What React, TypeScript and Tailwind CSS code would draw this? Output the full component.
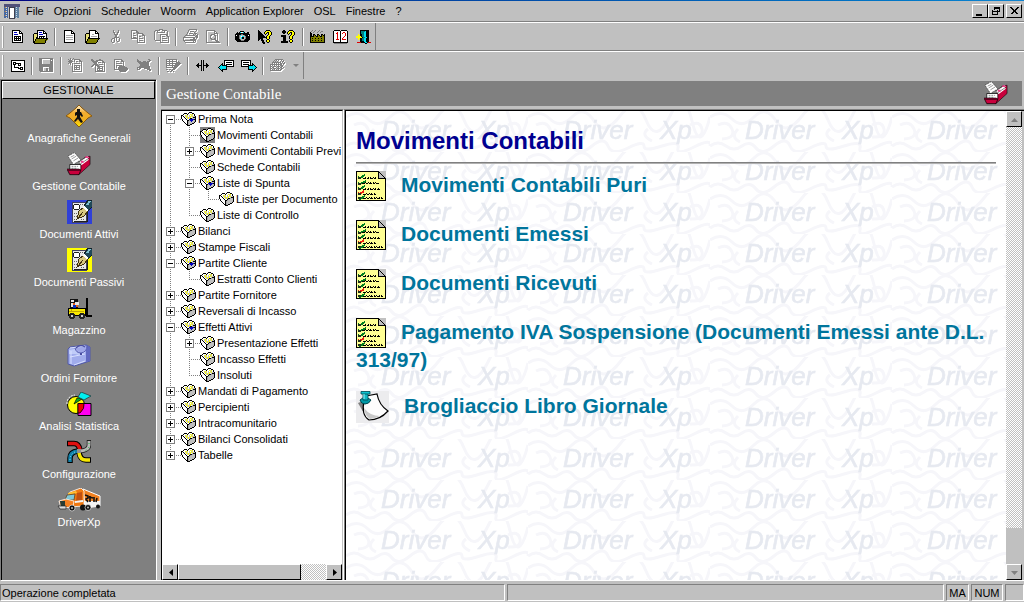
import React, { useState } from "react";

type Node = { label: string; open?: boolean; selected?: boolean; children?: Node[] };

const palette: Record<string, string> = {
  k: "#000000",
  w: "#ffffff",
  g: "#808080",
  s: "#c0c0c0",
  y: "#ffff00",
  o: "#808000",
  b: "#0000c0",
  c: "#00e0f0",
  t: "#008080",
  r: "#e00000",
  l: "#e8e078",
  d: "#a8a8a8",
};

function Pixels({ rows, disabled = false }: { rows: string[]; disabled?: boolean }) {
  const w = Math.max(...rows.map((r) => r.length));
  const h = rows.length;
  const runs: { x: number; y: number; n: number; c: string }[] = [];
  rows.forEach((row, y) => {
    let x = 0;
    while (x < row.length) {
      const c = row[x];
      let n = 1;
      while (row[x + n] === c) n++;
      if (palette[c]) runs.push({ x, y, n, c });
      x += n;
    }
  });
  const ink = disabled ? runs.filter((r) => r.c === "k") : runs;
  const extra = disabled ? 1 : 0;
  return (
    <svg width={w + extra} height={h + extra} shapeRendering="crispEdges" aria-hidden="true" className="shrink-0">
      {disabled && ink.map((r, i) => <rect key={"s" + i} x={r.x + 1} y={r.y + 1} width={r.n} height={1} fill="#ffffff" />)}
      {ink.map((r, i) => (
        <rect key={i} x={r.x} y={r.y} width={r.n} height={1} fill={disabled ? "#808080" : palette[r.c]} />
      ))}
    </svg>
  );
}

const art: Record<string, string[]> = {
  report: [
    "kkkkkkkk...",
    "kwwwwwwkk..",
    "kwbbbwwkwk.",
    "kwwwwwwkkkk",
    "kwbbbbwwwwk",
    "kwwwwwwwwwk",
    "kwkkkkkkkwk",
    "kwkwkwkwkwk",
    "kwkkkkkkkwk",
    "kwkwkwkwkwk",
    "kwkkkkkkkwk",
    "kwwwwwwwwwk",
    "kkkkkkkkkkk",
  ],
  openReport: [
    "....kkkkkkk....",
    "....kwwwwwkk...",
    "....kwbbbwkwk..",
    ".kkkkwwwwwkkkk.",
    "klllkwbbbbwwwk.",
    "klllkwwwwwwwwk.",
    "klllkwkkkkkkwk.",
    "kllkkwkwkwkwwk.",
    "kllkkkkkkkkkkkk",
    "klkooooooooooko",
    "klkoooooooooko.",
    "kkooooooooook..",
    "kkooooooooook..",
    ".kkkkkkkkkkk...",
  ],
  page: [
    "kkkkkkkk...",
    "kwwwwwwkk..",
    "kwwwwwwkwk.",
    "kwwwwwwkkkk",
    "kwwwwwwwwwk",
    "kwdddddddwk",
    "kwwwwwwwwwk",
    "kwdddddddwk",
    "kwwwwwwwwwk",
    "kwdddddddwk",
    "kwwwwwwwwwk",
    "kwwwwwwwwwk",
    "kkkkkkkkkkk",
  ],
  openPage: [
    "....kkkkkkk....",
    "....kwwwwwkk...",
    "....kwwwwwkwk..",
    ".kkkkwwwwwkkkk.",
    "klllkwwddwwwwk.",
    "klllkwwwwwwwwk.",
    "klllkwddddddwk.",
    "kllkkwwwwwwwwk.",
    "kllkkkkkkkkkkkk",
    "klkooooooooook.",
    "klkoooooooook..",
    "kkooooooooook..",
    "kkoooooooook...",
    ".kkkkkkkkkk....",
  ],
  cut: [
    "..k....k.",
    "..k....k.",
    "..kk..kk.",
    "...k..k..",
    "...kkkk..",
    "....kk...",
    "....kk...",
    "...kkkkk.",
    ".kkk.k..k",
    "k..k.k..k",
    "k..k.k..k",
    "k..k..kk.",
    ".kk......",
  ],
  copy: [
    "kkkkkk.........",
    "k....kk........",
    "k....kkk.......",
    "k.kk..kkkkkk...",
    "k.....k....kk..",
    "k.kkk.k....kkk.",
    "k.....k.kk...k.",
    "k.kkk.k......k.",
    "kkkkkkk.kkkk.k.",
    "......k......k.",
    "......k.kkkk.k.",
    "......k......k.",
    "......kkkkkkkk.",
  ],
  paste: [
    ".....kkkk......",
    ".kkkkk..kkkkk..",
    "k..k......k..k.",
    "k..kkkkkkkk..k.",
    "k............k.",
    "k.....kkkkkkkk.",
    "k.....k.....kk.",
    "k.....k.kkk..kk",
    "k.....k.......k",
    "k.....k.kkkkk.k",
    "k.....k.......k",
    ".kkkkkk.kkkkk.k",
    "......k.......k",
    "......kkkkkkkkk",
  ],
  print: [
    "......kkkkkkkk.",
    ".....k.......k.",
    ".....k.kkkk.k..",
    "....k......k...",
    "....k.kkkk.kkk.",
    "...k......k.k.k",
    "..kkkkkkkkkk.kk",
    ".k..........kkk",
    "kkkkkkkkkkkk.kk",
    "k.........kk.k.",
    "k......kkkkkk..",
    "kkkkkkkkkkkkk..",
    ".k........k.k..",
    "..kkkkkkkkkk...",
  ],
  preview: [
    "kkkkkkkkk.....",
    "k.......kk....",
    "k.......k.k...",
    "k.......kkkk..",
    "k....kkkk..k..",
    "k...kk..kk.k..",
    "k...k....k.k..",
    "k...k....k.k..",
    "k...kk..kk.k..",
    "k....kkkkk.k..",
    "k........kkk..",
    "k.........kkk.",
    "kkkkkkkkkkkkkk",
  ],
  camera: [
    ".....kkkk......",
    "..k.kcwwck..kk.",
    ".kkkkkkkkkkkkk.",
    "kkkkkkggkkkkkkk",
    "kwkkgcsssgkkkwk",
    "kkkkgswccsgkkkk",
    "kkkkgsckksgkkkk",
    "kkkkgsckksgkkkk",
    "kkkkkgsssgkkkkk",
    ".kkkkkgggkkkkk.",
    "..kkkkkkkkkkk..",
  ],
  pointerHelp: [
    "k.......kkkk...",
    "kk.....kyyyyk..",
    "kkk...kyykkyyk.",
    "kkkk..kyk.kyyk.",
    "kkkkk..k..kyyk.",
    "kkkkkk...kyyk..",
    "kkkkkkk.kyyk...",
    "kkkkkkkkkyyk...",
    "kkkkk...kyyk...",
    "kk.kk....kk....",
    "k..kkk..kyyk...",
    "....kk..kyyk...",
    "....kkk..kk....",
    ".....kk........",
  ],
  infoHelp: [
    "..kk....kkkk...",
    ".kkkk..kyyyyk..",
    ".kkkk.kyykkyyk.",
    "..kk..kyk.kyyk.",
    ".......k..kyyk.",
    "kkkkk....kyyk..",
    "kkkkk...kyyk...",
    "..kkk...kyyk...",
    "..kkk...kyyk...",
    "..kkk....kk....",
    "..kkk...kyyk...",
    "kkkkkkk.kyyk...",
    "kkkkkkk..kk....",
  ],
  factory: [
    "..g..g...g.....",
    ".g..g...g..gg..",
    "k..g...g..g....",
    "kk.............",
    "kk.kk..kk..kk.k",
    "kk.kok.kok.kokk",
    "kkkkookkookkook",
    "koooooooooooook",
    "kokookookookook",
    "koooooooooooook",
    "kokookookookook",
    "koooooooooooook",
    "kkkkkkkkkkkkkkk",
  ],
  book: [
    ".kkkkkk.kkkkkk..",
    "kwwwwwwkwwwwwwk.",
    "kwwwrwwkwwrrwwk.",
    "kwwrrwwkwrwwrwk.",
    "kwwwrwwkwwwwrwk.",
    "kwwwrwwkwwwwrwk.",
    "kwwwrwwkwwwrwwk.",
    "kwwwrwwkwwrwwwk.",
    "kwwwrwwkwrwwwwk.",
    "kwwrrrwkwrrrrwk.",
    "kwwwwwwkwwwwwwk.",
    "kwwwwwwkwwwwwwk.",
    "kkkkkkkkkkkkkkk.",
    ".ggggggggggggg..",
  ],
  door: [
    "....kkkkkkkkk..",
    "....kttttckkk..",
    "....ktttcckkk..",
    "....ktttcckkk..",
    "..y.kkttcckkk..",
    "..yykkttcckkk..",
    "yyyyykttcckkk..",
    "yyyyyykttcckk..",
    "..yykkttcckkk..",
    "..y.kkttcckkk..",
    "....kkttcckkk..",
    "....kkkkcckkk..",
    ".rrrrkkkkcckrrr",
    ".........kk....",
  ],
  treeView: [
    "kkkkkkkkkkkkkk",
    "kwwwwwwwwwwwwk",
    "kwkkkwwwwwwwwk",
    "kwkwkkkkkkwwwk",
    "kwkkkwwkwkwwwk",
    "kwwkwwwkkkwwwk",
    "kwwkwwwwwwwwwk",
    "kwwkkkkkwkkkwk",
    "kwwwwwwkkkwkwk",
    "kwwwwwwwwkkkwk",
    "kwwwwwwwwwwwwk",
    "kkkkkkkkkkkkkk",
  ],
  save: [
    "kkkkkkkkkkkkkk",
    "kkk........kkk",
    "kkk........k.k",
    "kkk........kkk",
    "kkk........kkk",
    "kkk........kkk",
    "kkkkkkkkkkkkkk",
    "kkkkkkkkkkkkkk",
    "kkkkkkkkkkkkkk",
    "kkkk......kkkk",
    "kkkk...kk.kkkk",
    "kkkk...kk.kkkk",
    "kkkk...kk.kkkk",
    ".kkkkkkkkkkkkk",
  ],
  addDoc: [
    "..k..k........",
    "k.k.k.kkkkkk..",
    ".kkk..k....kk.",
    "kkkkk.k.kk.kkk",
    ".kkk.........k",
    "k.k.k.kkkkkk.k",
    "..k.k........k",
    "....k.kkkkkk.k",
    "....k.k.k..k.k",
    "....k.kkkkkk.k",
    "....k.k.k..k.k",
    "....k.kkkkkk.k",
    "....k........k",
    "....kkkkkkkkkk",
  ],
  removeDoc: [
    "kk......kk....",
    "kkk..kkkkkkk..",
    ".kkkkkk....kk.",
    "..kkkk.kkk.kkk",
    "...kkk.......k",
    "..kkkkk.kkkk.k",
    ".kk.kkkk.....k",
    "kk..k.kkkkkk.k",
    "....k..kk..k.k",
    "....k.kkkkkk.k",
    "....k.k.k..k.k",
    "....k.kkkkkk.k",
    "....kkkkkkkkkk",
  ],
  findDoc: [
    "kkkkkkkk......",
    "k......kk.....",
    "k.kkk..kkk....",
    "k........k....",
    "k.kkkkkk.k....",
    "k........k....",
    "k.kkkkkk.k....",
    "k.k..kkkkkk...",
    "k.k.kkkkkkkkk.",
    "k...kkkkkkkkkk",
    "kkkkkkkkkkkkkk",
    ".....kkkkkkkk.",
    "......kkkkkk..",
  ],
  runDoc: [
    "k..........kk.",
    "kk..........kk",
    "kkkk..kkk.kkk.",
    ".kkkkkkkkkkk..",
    "..kkkkkkkkkk..",
    "...kkkkkkkkk..",
    "...kkkkkkkkk..",
    "..kkkkkkkkkkk.",
    "kkkkkkkkkkkkk.",
    "k.kk...kkkkkk.",
    "kkk.......kkkk",
    "............kk",
  ],
  editGrid: [
    "kkkkkkkkkkk....",
    "k..k..k...k....",
    "kkkkkkkkkkk.k..",
    "k..k..k...kkkk.",
    "kkkkkkkkkkkkkkk",
    "k..k..k..kkkkk.",
    "kkkkkkkkkkkkk..",
    "k.....k.kkkk...",
    "kkkkkkkkkkk....",
    ".......kkk.....",
    "kk.kk.kkk......",
    ".....kk........",
    ".kk.kk.k.......",
  ],
  splitView: [
    ".....k.k.....",
    ".....k.k.....",
    ".....k.k.....",
    "..k..k.k..k..",
    ".kk..k.k..kk.",
    "kkkkkk.kkkkkk",
    ".kk..k.k..kk.",
    "..k..k.k..k..",
    ".....k.k.....",
    ".....k.k.....",
    ".....k.k.....",
  ],
  prev: [
    "......kkkkkkkkkk",
    "......kwwwwwwwwk",
    "......kwkkkkkkwk",
    "....k.kwwwwwwwwk",
    "...kk.kwkkkkkkwk",
    "..kckkkkkwwwwwwk",
    ".kcccccckkkkkkkk",
    "kccccccck.......",
    ".kcccccck.......",
    "..kckkkkk.......",
    "...kk...........",
    "....k...........",
  ],
  next: [
    "kkkkkkkkkk......",
    "kwwwwwwwwk......",
    "kwkkkkkkwk......",
    "kwwwwwwwwk.k....",
    "kwkkkkkkwk.kk...",
    "kwwwwwwkkkkkck..",
    "kkkkkkkkcccccck.",
    ".......kccccccck",
    ".......kcccccck.",
    ".......kkkkkck..",
    "...........kk...",
    "...........k....",
  ],
  stamp: [
    ".....kkkkkkkk..",
    "....k.k.k..k.k.",
    "...k.k.k..k.kk.",
    "..kkkkkkkkk.k.k",
    "..k.k.k.k.kk.kk",
    "kkkkkkkkkkkk.k.",
    "k.k.k.k.k.kkk..",
    "kk.kkk.kkk.kk..",
    "k.kk..k.k.kk.k.",
    "kk.kkk.kkk.kk..",
    "k.k.k.k.k.kk...",
    "kkkkkkkkkkk....",
  ],
  folder: [
    "........kkk....",
    "...kkk.kwwwkk..",
    "..kwwwkwwysywk.",
    "kkwwysywswyswk.",
    "kwkwsyswsysyssk",
    "kwwkwysysywskkk",
    "kwwwkwsyskkdssk",
    ".kwwwkwwkdssssk",
    ".kwwwwkkdsssssk",
    "..kwwwkdsssssdk",
    "...kwwkdsssssk.",
    "....kwkdssskk..",
    ".....kkdskk....",
    "......kkk......",
  ],
  folderOpen: [
    "........kkk....",
    "...kkk.kwwwkk..",
    "..kwwwkwwysywk.",
    "kkwwysywswyswk.",
    "kwkwsyswsysyssk",
    "kwwkwysysywskkk",
    "kwwwkwsyskkdssk",
    ".kwwwkwwbbbbbkk",
    ".kwwwwkkdbbbssk",
    "..kwwwkdssbssdk",
    "...kwwkdsssssk.",
    "....kwkdssskk..",
    ".....kkdskk....",
    "......kkk......",
  ],
};

function ToolButton({ icon, label, disabled = false }: { icon: string; label: string; disabled?: boolean }) {
  return (
    <button type="button" aria-label={label} disabled={disabled} className="flex h-[22px] w-[23px] items-center justify-center">
      <Pixels rows={art[icon]} disabled={disabled} />
    </button>
  );
}

function Divider() {
  return (
    <span className="flex h-[22px] w-[6px] justify-center">
      <span className="h-[18px] self-center border-r border-l border-l-[#808080] border-r-white" />
    </span>
  );
}

function ToolStrip({ children }: { children: React.ReactNode }) {
  return (
    <div role="toolbar" className="inline-flex h-[27px] items-center border-r border-[#808080] pl-[2px] align-top">
      <span className="mr-[2px] h-[22px] w-[2px] border-l border-white bg-[#a0a0a0]" />
      {children}
    </div>
  );
}

function CardFile() {
  return (
    <svg width="24" height="25" viewBox="0 0 26 26" aria-hidden="true">
      <path d="M12 15 L20 5 L25 4 L25 13 L14 23 L12 24Z" fill="#c8003c" stroke="#000" strokeWidth="0.6" />
      <path d="M14 11 L23 5 M15 13 L23 7" stroke="#fff" strokeWidth="2" />
      <path d="M15 12 L24 6 M13 10 L20 5" stroke="#222" strokeWidth="0.6" />
      <path d="M20 4h3v2h-3z M15 9h3v2h-3z" fill="#f0408c" />
      <path d="M1 4 L8 0 L15 8 L7 13Z" fill="#fff" stroke="#333" strokeWidth="0.8" strokeDasharray="2 1" />
      <path d="M4 5 L8 3 M5 7 L10 4 M7 9 L12 6" stroke="#777" strokeWidth="0.8" />
      <path d="M3 13h12v6h-12z" fill="#fff" stroke="#000" strokeWidth="0.8" />
      <path d="M5 15h7M5 17h6" stroke="#888" strokeDasharray="2 1" />
      <path d="M0 18h13l2 1-2 5H3z" fill="#c8003c" stroke="#000" strokeWidth="0.8" />
      <path d="M0 18h14v2H1z" fill="#600020" />
    </svg>
  );
}

function PenDocument({ ground }: { ground: string }) {
  return (
    <svg width="25" height="24" viewBox="0 0 25 24" shapeRendering="crispEdges" aria-hidden="true">
      <rect width="25" height="24" fill={ground} />
      <path d="M5 22V2h14v20z" fill="#e8e8e8" stroke="#404060" />
      <path d="M7 21h13V8" fill="none" stroke="#202020" />
      <circle cx="9.5" cy="7" r="3" fill="#fff" stroke="#222" />
      <path d="M7 13h4M7 16h3M7 19h4M14 19h3M13 4h3" stroke="#666" strokeDasharray="1 1" />
      <path d="M17 6 L21 0 L25 0 L25 7 L21 11Z" fill="#204858" stroke="#102028" />
      <path d="M20 5 L23 1" stroke="#80c0d0" strokeWidth="2" />
      <path d="M10 19 L12 11 L17 7 L21 11 L17 16Z" fill="#d8c880" stroke="#403010" />
      <path d="M11 18 L16 12" stroke="#403010" />
      <path d="M17 7l4 4" stroke="#fff" strokeWidth="2" />
    </svg>
  );
}

function Crossing() {
  return (
    <svg width="28" height="24" viewBox="0 0 28 24" aria-hidden="true">
      <defs>
        <linearGradient id="sign" x1="0" y1="0" x2="0" y2="1">
          <stop offset="0" stopColor="#fff4d8" />
          <stop offset="0.35" stopColor="#f4ae30" />
          <stop offset="0.7" stopColor="#f0b020" />
          <stop offset="1" stopColor="#fff000" />
        </linearGradient>
      </defs>
      <path d="M14 1 L17 4 L23 9 L27 12 L23 14 L17 20 L14 23 L11 20 L5 14 L1 12 L5 9 L11 4Z" fill="url(#sign)" stroke="#8a5a10" strokeWidth="1" />
      <path d="M12 5h3v3h-3zM11 8h5l2 4-1 1-2-2v2l3 5-2 1-3-4-3 3-1-1 3-4v-2l-2 1 0-3z" fill="#101010" />
    </svg>
  );
}

function Forklift() {
  return (
    <svg width="28" height="24" viewBox="0 0 28 24" shapeRendering="crispEdges" aria-hidden="true">
      <path d="M22 2v18h5" fill="none" stroke="#000" strokeWidth="1.4" />
      <path d="M5 3h8v9H5z" fill="#101010" />
      <path d="M6 4h3v2H6zM10 6h4v3h-4zM6 7h2v4H6z" fill="#e8e8e8" />
      <path d="M8 7h2v2H8zM11 9h2v2h-2z" fill="#e06020" />
      <path d="M8 9h3v3H8z" fill="#0030c0" />
      <path d="M3 12h17v7H3z" fill="#f8e800" stroke="#000" />
      <path d="M4 15h15M6 13v2" stroke="#c0a800" />
      <circle cx="7" cy="20" r="3" fill="#222" />
      <circle cx="17" cy="20" r="3" fill="#222" />
      <circle cx="7" cy="20" r="1" fill="#ccc" />
      <circle cx="17" cy="20" r="1" fill="#ccc" />
    </svg>
  );
}

function Briefcase() {
  return (
    <svg width="24" height="24" viewBox="0 0 24 24" aria-hidden="true">
      <path d="M1 5 L3 3 L19 1 L23 3 L23 17 L7 22 L1 20Z" fill="#a0acec" stroke="#5058a8" />
      <path d="M19 1 L23 3 L23 17 L19 18Z" fill="#6068c0" />
      <path d="M2 6 L18 3 L18 9 Q12 12 8 10 L2 10Z" fill="#c0ccf8" />
      <path d="M8 4 Q9 9 14 9 Q20 8 20 2" fill="#a0a8e8" stroke="#5860b0" />
      <path d="M4 7v13M3 13l15-3M7 21l11-4M3 4l15-2" stroke="#d8e0ff" />
      <path d="M9 4 Q13 0 18 3" fill="none" stroke="#484ca0" strokeWidth="1.2" />
      <path d="M13 9h2v2h-2z" fill="#484ca0" />
    </svg>
  );
}

function Shapes() {
  return (
    <svg width="26" height="24" viewBox="0 0 26 24" aria-hidden="true">
      <circle cx="10" cy="13" r="8.5" fill="#ffff00" stroke="#000" />
      <path d="M1 12 Q1 4 9 3" fill="none" stroke="#fff" strokeDasharray="2 1" />
      <path d="M8 12 L11 6 L16 7Z" fill="#00b020" stroke="#000" strokeWidth="0.7" />
      <path d="M12 5 L15 0 L25 4 L18 8Z" fill="#00f0f0" stroke="#204040" strokeWidth="0.8" />
      <path d="M12 11.500h13v12h-13z" fill="#ff00f0" stroke="#000" />
      <path d="M12 11.500h6q1 5-4 9.500h-2z" fill="#f00000" stroke="#000" strokeWidth="0.8" />
    </svg>
  );
}

function Tools() {
  return (
    <svg width="24" height="24" viewBox="0 0 24 24" aria-hidden="true">
      <g fill="none">
        <path d="M0 3.500h7q5 0 6 7" stroke="#000" strokeWidth="5.500" />
        <path d="M22 0v5q0 5-8 6" stroke="#202020" strokeWidth="4.500" />
        <path d="M3 23v-5q0-6 8-7" stroke="#000" strokeWidth="5.500" />
        <path d="M12 12q1 8 7 8h5" stroke="#000" strokeWidth="5.500" />
        <path d="M1 3.500h6q5 0 6 7" stroke="#e01010" strokeWidth="3.500" />
        <path d="M22 1v4q0 5-8 6" stroke="#b8b8b8" strokeWidth="3" />
        <path d="M3 22v-4q0-6 8-7" stroke="#1080a8" strokeWidth="3.500" />
        <path d="M12 13q1 7 7 7h4" stroke="#f8e800" strokeWidth="3.500" />
        <path d="M22 3v3q0 4-6 5" stroke="#20c040" strokeWidth="1" strokeDasharray="1 3" />
        <path d="M3 20q0-6 5-8" stroke="#90e0f0" strokeWidth="1" strokeDasharray="1 2" />
      </g>
      <rect x="10" y="9" width="4" height="4" fill="#909090" />
    </svg>
  );
}

function Truck() {
  return (
    <svg width="44" height="24" viewBox="0 0 44 24" aria-hidden="true">
      <path d="M26 1 L43 8 L43 18 L28 20Z" fill="#f08020" stroke="#fff" strokeWidth="1" />
      <path d="M27 13 L43 13 L43 18 L28 20Z" fill="#f4f4f4" />
      <path d="M28 7l3 1v2l-2 1 2 3M33 8v6M32 9l4 1M37 9v5M40 10l-1 4" stroke="#101010" strokeWidth="1.600" fill="none" />
      <path d="M13 4 L24 0 L27 3 L27 18 L12 19 L9 12Z" fill="#f07810" stroke="#fff" strokeWidth="0.800" />
      <path d="M11 5l8-2 1 2-9 2z" fill="#ffc030" />
      <path d="M10 7 L18 6 L17 12 L8 12Z" fill="#80c8d8" stroke="#604020" strokeWidth="0.800" />
      <path d="M20 5l5-1v8l-6 1z" fill="#c05010" />
      <path d="M18 13l8-1v2l-8 1z" fill="#f4f4f4" />
      <path d="M2 13 L9 11 L17 13 L16 19 L4 20Z" fill="#f48020" stroke="#fff" strokeWidth="0.800" />
      <path d="M3 13h5v7H4z" fill="#283c34" />
      <path d="M1 18h8v3H3z" fill="#ddd" stroke="#222" strokeWidth="0.700" />
      <circle cx="15" cy="20" r="3" fill="#111" stroke="#fff" strokeWidth="0.600" />
      <circle cx="26" cy="19.500" r="3" fill="#111" />
      <circle cx="31" cy="19.500" r="3" fill="#111" stroke="#fff" strokeWidth="0.600" />
      <circle cx="41" cy="18.500" r="2" fill="#111" />
      <circle cx="15" cy="20" r="1" fill="#bbb" />
      <circle cx="31" cy="19.500" r="1" fill="#bbb" />
    </svg>
  );
}

const modules: { label: string; icon: React.ReactNode }[] = [
  { label: "Anagrafiche Generali", icon: <Crossing /> },
  { label: "Gestione Contabile", icon: <CardFile /> },
  { label: "Documenti Attivi", icon: <PenDocument ground="#3040d8" /> },
  { label: "Documenti Passivi", icon: <PenDocument ground="#ffff00" /> },
  { label: "Magazzino", icon: <Forklift /> },
  { label: "Ordini Fornitore", icon: <Briefcase /> },
  { label: "Analisi Statistica", icon: <Shapes /> },
  { label: "Configurazione", icon: <Tools /> },
  { label: "DriverXp", icon: <Truck /> },
];

const menuTree: Node[] = [
  {
    label: "Prima Nota",
    open: true,
    children: [
      { label: "Movimenti Contabili", selected: true },
      { label: "Movimenti Contabili Previ", children: [] },
      { label: "Schede Contabili" },
      { label: "Liste di Spunta", open: true, children: [{ label: "Liste per Documento" }] },
      { label: "Liste di Controllo" },
    ],
  },
  { label: "Bilanci", children: [] },
  { label: "Stampe Fiscali", children: [] },
  { label: "Partite Cliente", open: true, children: [{ label: "Estratti Conto Clienti" }] },
  { label: "Partite Fornitore", children: [] },
  { label: "Reversali di Incasso", children: [] },
  {
    label: "Effetti Attivi",
    open: true,
    children: [{ label: "Presentazione Effetti", children: [] }, { label: "Incasso Effetti" }, { label: "Insoluti" }],
  },
  { label: "Mandati di Pagamento", children: [] },
  { label: "Percipienti", children: [] },
  { label: "Intracomunitario", children: [] },
  { label: "Bilanci Consolidati", children: [] },
  { label: "Tabelle", children: [] },
];

function Branch({ up, down, across, box }: { up: boolean; down: boolean; across: boolean; box?: "plus" | "minus" }) {
  return (
    <svg width="19" height="16" shapeRendering="crispEdges" aria-hidden="true" className="shrink-0">
      <g stroke="#808080" strokeDasharray="1 1">
        {up && <path d="M8.500 0V8" />}
        {down && <path d="M8.500 8V16" />}
        {across && <path d="M8 8.500H19" />}
      </g>
      {box && (
        <>
          <rect x="4.500" y="4.500" width="8" height="8" fill="#fff" stroke="#808080" />
          <rect x="6" y="8" width="5" height="1" fill="#000" />
          {box === "plus" && <rect x="8" y="6" width="1" height="5" fill="#000" />}
        </>
      )}
    </svg>
  );
}

function TreeItem({ node, guides, first, last }: { node: Node; guides: boolean[]; first: boolean; last: boolean }) {
  const [open, setOpen] = useState(!!node.open);
  const expandable = !!node.children;
  const branch = <Branch up={!first} down={!last} across box={expandable ? (open ? "minus" : "plus") : undefined} />;
  return (
    <li>
      <div className="flex h-4 items-center whitespace-nowrap">
        {guides.map((g, i) => (
          <Branch key={i} up={g} down={g} across={false} />
        ))}
        {expandable ? (
          <button type="button" aria-expanded={open} aria-label={node.label} onClick={() => setOpen(!open)} className="shrink-0">
            {branch}
          </button>
        ) : (
          branch
        )}
        <button type="button" className="flex items-center gap-[2px]">
          <span className={node.selected ? "bg-[#808080]" : ""}>
            <span className="flex h-4 items-center">
              <Pixels rows={art[expandable && open ? "folderOpen" : "folder"]} />
            </span>
          </span>
          {node.label}
        </button>
      </div>
      {expandable && open && <TreeList nodes={node.children!} guides={[...guides, !last]} />}
    </li>
  );
}

function TreeList({ nodes, guides }: { nodes: Node[]; guides: boolean[] }) {
  return (
    <ul>
      {nodes.map((n, i) => (
        <TreeItem key={n.label} node={n} guides={guides} first={i === 0 && guides.length === 0} last={i === nodes.length - 1} />
      ))}
    </ul>
  );
}

function NoteIcon() {
  return (
    <svg width="30" height="30" viewBox="0 0 30 30" shapeRendering="crispEdges" aria-hidden="true" className="inline-block align-middle">
      <path d="M0.500 0.500H23L29.500 7V29.500H0.500Z" fill="#ffff94" stroke="#000" />
      <path d="M22 0h8v8h-8z" fill="#c0c0c0" />
      <path d="M22.500 0V7.500H30M22.500 0.500L29.500 7.500" fill="none" stroke="#000" />
      <g fill="none" stroke="#008020" strokeWidth="2">
        <path d="M2 6l2 1 5-3M2 12l2 1 6-3M2 17l2 1 5-3M2 27l2 1 5-3" />
      </g>
      <path d="M2 22l2 1 4-3" fill="none" stroke="#f02010" strokeWidth="2" />
      <path d="M2 6h3v2H2zM2 12h3v2H2zM2 17h3v2H2zM2 22h3v2H2zM2 26h3v2H2z" fill="#203020" />
      <g stroke="#000" strokeDasharray="3 1 2 1">
        <path d="M7 7.500h13M6 12.500h17M7 18.500h18M7 23.500h13M7 27.500h20" />
      </g>
      <g stroke="#000" strokeDasharray="1 2 1 1">
        <path d="M9 6.500h11M9 11.500h13M9 17.500h15M10 22.500h9M10 26.500h16" />
      </g>
    </svg>
  );
}

function PinIcon() {
  return (
    <svg width="33" height="32" viewBox="0 0 33 32" aria-hidden="true" className="inline-block align-middle">
      <rect width="33" height="32" fill="#ececee" />
      <path d="M2 12 L12 8 L9 24Z" fill="#808080" />
      <path d="M10 5 L21 3 Q23 14 32 20 Q24 29 13 29 Q5 24 8 10Z" fill="#fdfdfd" stroke="#000" strokeWidth="1.200" />
      <path d="M8 17 Q9 25 14 28 Q20 27 24 25 Q14 25 8 17" fill="#c8c8c8" />
      <path d="M4 9 Q9 4 15 9 Q13 13 9 13 Q5 13 4 9Z" fill="#009aa8" stroke="#004850" />
      <path d="M7 2h5v7H7z" fill="#10b8c4" stroke="#004850" strokeWidth="0.800" />
      <path d="M5 0.500h9v2.500H5z" fill="#10c4d0" stroke="#004850" strokeWidth="0.800" />
      <path d="M8 3v5" stroke="#a0f4f8" />
    </svg>
  );
}

function Watermark() {
  return (
    <svg className="absolute inset-0 h-full w-full" aria-hidden="true">
      <defs>
        <pattern id="driver" width="182" height="41" patternUnits="userSpaceOnUse">
          <g fill="none" stroke="#f6f6fa" strokeWidth="3">
            <path d="M0 6 Q12 -2 22 8 T44 6 T66 10 T92 5 T118 9 T142 5 T164 10 T182 6" />
            <path d="M0 35 q8 -6 16 0 t16 0 t14 2 t18 -2 t16 0 t20 2 t16 -2 t18 0 t16 2 t16 -1 t16 -1" />
            <path d="M8 14 q10 -5 14 4 t-10 10 M162 14 q10 -5 12 4 t-12 8 M28 18 q-8 8 2 13 M120 18 q-8 6 4 12" />
          </g>
          <g fontFamily="'Liberation Sans', sans-serif" fontStyle="italic" fill="#e6e9f0" stroke="#e6e9f0" strokeWidth="0.600">
            <text x="35" y="28" fontSize="26">Driver</text>
            <text x="132" y="28" fontSize="26">Xp</text>
          </g>
        </pattern>
      </defs>
      <rect width="100%" height="100%" fill="url(#driver)" />
    </svg>
  );
}

const links: { label: string; icon: React.ReactNode }[] = [
  { label: "Movimenti Contabili Puri", icon: <NoteIcon /> },
  { label: "Documenti Emessi", icon: <NoteIcon /> },
  { label: "Documenti Ricevuti", icon: <NoteIcon /> },
  { label: "Pagamento IVA Sospensione (Documenti Emessi ante D.L. 313/97)", icon: <NoteIcon /> },
  { label: "Brogliaccio Libro Giornale", icon: <PinIcon /> },
];

function ScrollButton({ dir, muted = false }: { dir: "left" | "right" | "up" | "down"; muted?: boolean }) {
  const shape = { left: "M9 3v7L5 6.500z", right: "M5 3v7l4-3.500z", up: "M3 9h7L6.500 5z", down: "M3 5h7L6.500 9z" }[dir];
  return (
    <button
      type="button"
      aria-label={dir}
      className="flex h-4 w-4 shrink-0 items-center justify-center border border-t-white border-r-black border-b-black border-l-white bg-[#c0c0c0]"
    >
      <svg width="13" height="13" aria-hidden="true">
        <path d={shape} fill={muted ? "#808080" : "#000"} />
      </svg>
    </button>
  );
}

function WindowButton({ label, children }: { label: string; children: React.ReactNode }) {
  return (
    <button
      type="button"
      aria-label={label}
      className="flex h-[14px] w-4 items-center justify-center border border-t-white border-r-black border-b-black border-l-white bg-[#c0c0c0]"
    >
      <svg width="12" height="11" shapeRendering="crispEdges" fill="none" stroke="#000" aria-hidden="true">
        {children}
      </svg>
    </button>
  );
}

const menus = ["File", "Opzioni", "Scheduler", "Woorm", "Application Explorer", "OSL", "Finestre", "?"];

const pane = "flex h-[17px] items-center border border-t-[#808080] border-r-white border-b-white border-l-[#808080] px-px leading-[14px]";

export default function App() {
  return (
    <div className="flex h-screen flex-col overflow-hidden bg-[#c0c0c0] font-['Liberation_Sans',Arial,sans-serif] text-[11px] leading-4 text-black">
      <div className="h-px shrink-0 bg-linear-to-r from-[#000080] to-[#1084d0]" />
      <header className="flex h-[20px] shrink-0 items-center justify-between pr-[2px] pl-1">
        <div className="flex items-center">
          <svg width="16" height="16" shapeRendering="crispEdges" aria-hidden="true" className="mr-[6px]">
            <rect y="1" width="16" height="3" fill="#505078" />
            <rect x="0" y="4" width="4" height="11" fill="#4868a0" />
            <rect x="5" y="4" width="5" height="11" fill="#fff" stroke="#404050" />
            <rect x="11" y="4" width="4" height="11" fill="#6080a0" />
            <path d="M12.500 4v11M2.500 4v11" stroke="#c8d8e8" strokeDasharray="1 1" />
            <path d="M1.500 4v11" stroke="#d09040" strokeDasharray="1 3" />
          </svg>
          <nav className="flex gap-[10px]">
            {menus.map((m) => (
              <button type="button" key={m}>
                {m}
              </button>
            ))}
          </nav>
        </div>
        <div className="flex">
          <WindowButton label="Riduci">
            <path d="M2 9h6" strokeWidth="2" />
          </WindowButton>
          <WindowButton label="Ripristina">
            <path d="M4 1.500h6M4.500 1v3M9.500 1v5M8 5.500h2M2 5h6M2.500 4v5M7.500 4v5M2 8.500h6M4 2h6" />
          </WindowButton>
          <span className="w-[2px]" />
          <WindowButton label="Chiudi">
            <path d="M2.500 1.500l7 7M9.500 1.500l-7 7M3.500 1.500l7 7M10.500 1.500l-7 7" />
          </WindowButton>
        </div>
      </header>

      <div className="shrink-0 border-t border-[#808080]">
        <div className="border-t border-b border-t-white border-b-[#808080]">
          <ToolStrip>
            <ToolButton icon="report" label="Nuovo report" />
            <ToolButton icon="openReport" label="Apri report" />
            <Divider />
            <ToolButton icon="page" label="Nuovo" />
            <ToolButton icon="openPage" label="Apri" />
            <ToolButton icon="cut" label="Taglia" disabled />
            <ToolButton icon="copy" label="Copia" disabled />
            <ToolButton icon="paste" label="Incolla" disabled />
            <Divider />
            <ToolButton icon="print" label="Stampa" disabled />
            <ToolButton icon="preview" label="Anteprima" disabled />
            <Divider />
            <ToolButton icon="camera" label="Istantanea" />
            <ToolButton icon="pointerHelp" label="Guida rapida" />
            <ToolButton icon="infoHelp" label="Informazioni" />
            <Divider />
            <ToolButton icon="factory" label="Azienda" />
            <ToolButton icon="book" label="Data" />
            <ToolButton icon="door" label="Esci" />
          </ToolStrip>
        </div>
        <div className="border-t border-white">
          <ToolStrip>
            <ToolButton icon="treeView" label="Albero" />
            <Divider />
            <ToolButton icon="save" label="Salva" disabled />
            <Divider />
            <ToolButton icon="addDoc" label="Aggiungi" disabled />
            <ToolButton icon="removeDoc" label="Rimuovi" disabled />
            <ToolButton icon="findDoc" label="Trova" disabled />
            <ToolButton icon="runDoc" label="Esegui" disabled />
            <Divider />
            <ToolButton icon="editGrid" label="Modifica" disabled />
            <Divider />
            <ToolButton icon="splitView" label="Dividi" />
            <ToolButton icon="prev" label="Indietro" />
            <ToolButton icon="next" label="Avanti" />
            <Divider />
            <ToolButton icon="stamp" label="Formato" disabled />
            <button type="button" aria-label="Altri formati" className="flex h-[22px] w-[14px] items-center justify-center">
              <svg width="6" height="4" aria-hidden="true">
                <path d="M0 0h6L3 3z" fill="#808080" />
              </svg>
            </button>
          </ToolStrip>
        </div>
      </div>

      <main className="flex min-h-0 flex-1">
        <aside className="flex w-[157px] shrink-0 flex-col border-t border-r border-b border-l border-t-[#808080] border-r-white border-b-white border-l-[#808080] bg-[#808080]">
          <div className="flex flex-1 flex-col border-t border-l border-black">
            <button
              type="button"
              className="mr-px flex h-[18px] items-center justify-center border border-t-white border-r-black border-b-black border-l-white bg-[#c0c0c0] leading-[14px]"
            >
              GESTIONALE
            </button>
            <ul className="flex flex-col gap-[7px] pt-[5px] text-white">
              {modules.map((m) => (
                <li key={m.label}>
                  <button type="button" className="flex w-full flex-col items-center">
                    <span className="flex h-6 items-center">{m.icon}</span>
                    <span className="pt-[3px] leading-[14px]">{m.label}</span>
                  </button>
                </li>
              ))}
            </ul>
          </div>
        </aside>

        <section className="flex min-w-0 flex-1 flex-col border-b border-white pt-[2px] pl-1">
          <div className="mr-[2px] flex h-[25px] shrink-0 items-center justify-between bg-[#808080] pr-[14px] pl-[5px]">
            <h1 className="font-['Liberation_Serif','Times_New_Roman',serif] text-[15px] leading-5 text-white">Gestione Contabile</h1>
            <CardFile />
          </div>
          <div className="mt-[3px] flex min-h-0 flex-1">
            <div className="flex w-[183px] shrink-0 flex-col border-t border-r border-[#808080] border-r-white">
              <div className="flex min-h-0 flex-1 flex-col border-t border-r border-l border-black border-r-[#c0c0c0] bg-white">
                <div className="min-h-0 flex-1 overflow-hidden">
                  <TreeList nodes={menuTree} guides={[]} />
                </div>
                <div className="flex h-4 shrink-0 bg-[repeating-conic-gradient(#fff_0_25%,#c0c0c0_0_50%)] bg-[length:2px_2px]">
                  <ScrollButton dir="left" />
                  <div className="w-[123px] border border-t-white border-r-black border-b-black border-l-white bg-[#c0c0c0]" />
                  <div className="flex-1" />
                  <ScrollButton dir="right" />
                </div>
              </div>
            </div>
            <div className="flex min-w-0 flex-1 border-t border-l border-[#808080]">
              <div className="flex min-w-0 flex-1 border-t border-l border-black bg-white">
                <div className="relative min-w-0 flex-1 overflow-hidden">
                  <Watermark />
                  <div className="relative px-[10px] pt-4">
                    <h2 className="text-[24px] leading-7 font-bold text-[#000090]">Movimenti Contabili</h2>
                    <hr className="mt-[7px] h-[2px] border-t border-b border-t-[#808080] border-b-[#b0b0b0]" />
                    <ul className="flex flex-col gap-[19px] pt-[7px]">
                      {links.map((l) => (
                        <li key={l.label} className="text-[21px] leading-6 font-bold text-[#00759c]">
                          <a href="#">
                            {l.icon}
                            <span className="pl-[15px]">{l.label}</span>
                          </a>
                        </li>
                      ))}
                    </ul>
                  </div>
                </div>
                <div className="flex w-[18px] shrink-0 flex-col border-r-2 border-[#c0c0c0] bg-[repeating-conic-gradient(#fff_0_25%,#c0c0c0_0_50%)] bg-[length:2px_2px]">
                  <ScrollButton dir="up" muted />
                  <div className="flex-1" />
                  <div className="h-9 bg-[#c0c0c0]" />
                  <ScrollButton dir="down" muted />
                </div>
              </div>
            </div>
          </div>
        </section>
      </main>

      <footer className="flex h-[22px] shrink-0 gap-[2px] border-b border-white pt-[3px]">
        <div className={`${pane} flex-[506]`}>Operazione completata</div>
        <div className={`${pane} flex-[438]`} />
        <div className={`${pane} w-[23px] justify-center`}>MA</div>
        <div className={`${pane} w-[32px] justify-center`}>NUM</div>
        <div className={`${pane} w-[19px]`} />
      </footer>
    </div>
  );
}
